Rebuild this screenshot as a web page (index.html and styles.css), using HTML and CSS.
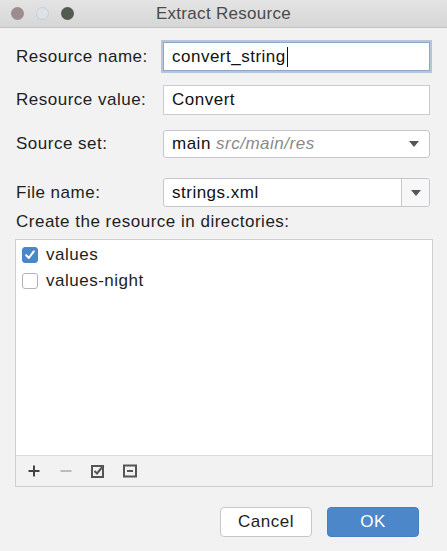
FILE: index.html
```html
<!DOCTYPE html>
<html>
<head>
<meta charset="utf-8">
<link rel="stylesheet" href="styles.css">
</head>
<body>
<div class="dialog">
  <div class="titlebar">
    <div class="lights">
      <span class="light l-close"></span>
      <span class="light l-min"></span>
      <span class="light l-max"></span>
    </div>
    <div class="title">Extract Resource</div>
  </div>
  <div class="content">
    <div class="form">
      <label class="lbl r1">Resource name:</label>
      <div class="field focus r1"><span class="val">convert_string</span><span class="caret"></span></div>
      <label class="lbl r2">Resource value:</label>
      <div class="field r2"><span class="val">Convert</span></div>
      <label class="lbl r3">Source set:</label>
      <div class="field combo r3"><span class="val">main <i class="hint">src/main/res</i></span><span class="arrow"></span></div>
      <label class="lbl r4">File name:</label>
      <div class="field ecombo r4"><span class="val">strings.xml</span><span class="abox"><span class="arrow"></span></span></div>
    </div>
    <div class="dirs-label">Create the resource in directories:</div>
    <div class="listbox">
      <div class="items">
        <div class="item"><span class="cb checked"><svg width="12" height="12" viewBox="0 0 12 12"><path d="M2.2 6.2 L4.8 9 L9.8 2.4" fill="none" stroke="#fff" stroke-width="2" stroke-linecap="round" stroke-linejoin="round"/></svg></span><span>values</span></div>
        <div class="item"><span class="cb"></span><span>values-night</span></div>
      </div>
      <div class="toolbar">
        <svg class="tb" width="14" height="14" viewBox="0 0 14 14"><path d="M7 1.5v11M1.5 7h11" stroke="#444" stroke-width="2"/></svg>
        <svg class="tb" width="14" height="14" viewBox="0 0 14 14"><path d="M1.5 7h11" stroke="#b8bcc4" stroke-width="2"/></svg>
        <svg class="tb" width="14" height="14" viewBox="0 0 14 14"><rect x="1" y="2" width="11" height="11" fill="none" stroke="#555" stroke-width="2"/><path d="M3.5 7l2.5 2.5L12.5 1.5" fill="none" stroke="#555" stroke-width="2"/></svg>
        <svg class="tb" width="14" height="14" viewBox="0 0 14 14"><rect x="1" y="1.5" width="12" height="11" fill="none" stroke="#555" stroke-width="2"/><path d="M4 7h6" stroke="#555" stroke-width="2"/></svg>
      </div>
    </div>
    <div class="buttons">
      <button class="btn cancel">Cancel</button>
      <button class="btn ok">OK</button>
    </div>
  </div>
</div>
</body>
</html>
```

FILE: styles.css
```css
* { box-sizing: border-box; }
html, body { margin: 0; padding: 0; }
body {
  width: 447px;
  height: 551px;
  background: #f2f2f2;
  font-family: "Liberation Sans", Arial, sans-serif;
  color: #1e1e1e;
  overflow: hidden;
}
.dialog {
  width: 447px;
  height: 551px;
  background: #f2f2f2;
  display: flex;
  flex-direction: column;
}
.titlebar {
  height: 28px;
  background: linear-gradient(#e4e4e4, #d6d6d6);
  border-bottom: 1px solid #c4c4c4;
  display: flex;
  align-items: center;
  position: relative;
}
.lights {
  display: flex;
  gap: 12px;
  padding-left: 11px;
}
.light {
  width: 13px;
  height: 13px;
  border-radius: 50%;
  display: block;
}
.l-close { background: #9d8c8e; }
.l-min { background: #dde2e8; border: 1px solid #c7ced6; }
.l-max { background: #525b52; }
.title {
  position: absolute;
  left: 0;
  right: 0;
  top: 0;
  line-height: 28px;
  text-align: center;
  font-size: 17px;
  letter-spacing: 0.3px;
  color: #4a4a4a;
  pointer-events: none;
}
.content {
  padding: 12px 15px 0 16px;
  display: flex;
  flex-direction: column;
  font-size: 17px;
  letter-spacing: 0.5px;
}
.form {
  display: grid;
  grid-template-columns: 147px 267px;
  align-items: center;
}
.lbl {
  color: #1e1e1e;
}
.lbl.r2 { margin-top: 12px; }
.lbl.r3 { margin-top: 15px; }
.lbl.r4 { margin-top: 20px; }
.field {
  height: 30px;
  background: #fff;
  border: 1px solid #c9cdd2;
  display: flex;
  align-items: center;
  padding-left: 8px;
  color: #111;
  position: relative;
}
.field.r2 { margin-top: 12px; }
.field.focus {
  height: 29px;
  border: 1px solid #8fa6c4;
  box-shadow: 0 0 0 2px #b6c6da;
  margin: 2px 0;
}
.caret {
  width: 1px;
  height: 20px;
  background: #111;
  margin-left: 1px;
}
.hint {
  color: #8a8a8a;
}
.combo {
  border-radius: 3px;
  height: 28px;
  margin-top: 15px;
  justify-content: space-between;
  padding-right: 10px;
  border-color: #c4c8cc;
}
.ecombo {
  border-radius: 3px;
  height: 29px;
  margin-top: 20px;
  justify-content: space-between;
  padding-right: 0;
  border-color: #c4c8cc;
}
.abox {
  width: 28px;
  height: 100%;
  border-left: 1px solid #c4c8cc;
  background: #f7f7f7;
  display: flex;
  align-items: center;
  justify-content: center;
  border-radius: 0 3px 3px 0;
}
.arrow {
  width: 0;
  height: 0;
  border-left: 5px solid transparent;
  border-right: 5px solid transparent;
  border-top: 6px solid #555;
}
.dirs-label {
  margin-top: 5px;
  line-height: 20px;
}
.listbox {
  margin-top: 7px;
  margin-left: -1px;
  width: 418px;
  height: 248px;
  border: 1px solid #cfcfcf;
  display: flex;
  flex-direction: column;
  background: #fff;
}
.items {
  flex: 1;
  padding: 7px 0 0 6px;
  display: flex;
  flex-direction: column;
  gap: 10px;
}
.item {
  display: flex;
  align-items: center;
  gap: 8px;
  height: 16px;
}
.cb {
  width: 16px;
  height: 16px;
  border: 1px solid #b0b4ba;
  border-radius: 3px;
  background: #fff;
  display: flex;
  align-items: center;
  justify-content: center;
}
.cb.checked {
  background: #4a86c8;
  border-color: #4a86c8;
}
.toolbar {
  height: 31px;
  border-top: 1px solid #dcdcdc;
  background: #f2f2f2;
  display: flex;
  align-items: center;
  gap: 18px;
  padding-left: 11px;
}
.buttons {
  display: flex;
  justify-content: flex-end;
  gap: 15px;
  margin-top: 20px;
  padding-right: 13px;
}
.btn {
  width: 92px;
  height: 30px;
  border-radius: 4px;
  font-family: "Liberation Sans", Arial, sans-serif;
  font-size: 17px;
  letter-spacing: 0.5px;
  padding: 0;
}
.cancel {
  background: #fff;
  border: 1px solid #c4c8ce;
  color: #1e1e1e;
}
.ok {
  background: #4b87c9;
  border: 1px solid #4680c2;
  color: #fff;
}
```
